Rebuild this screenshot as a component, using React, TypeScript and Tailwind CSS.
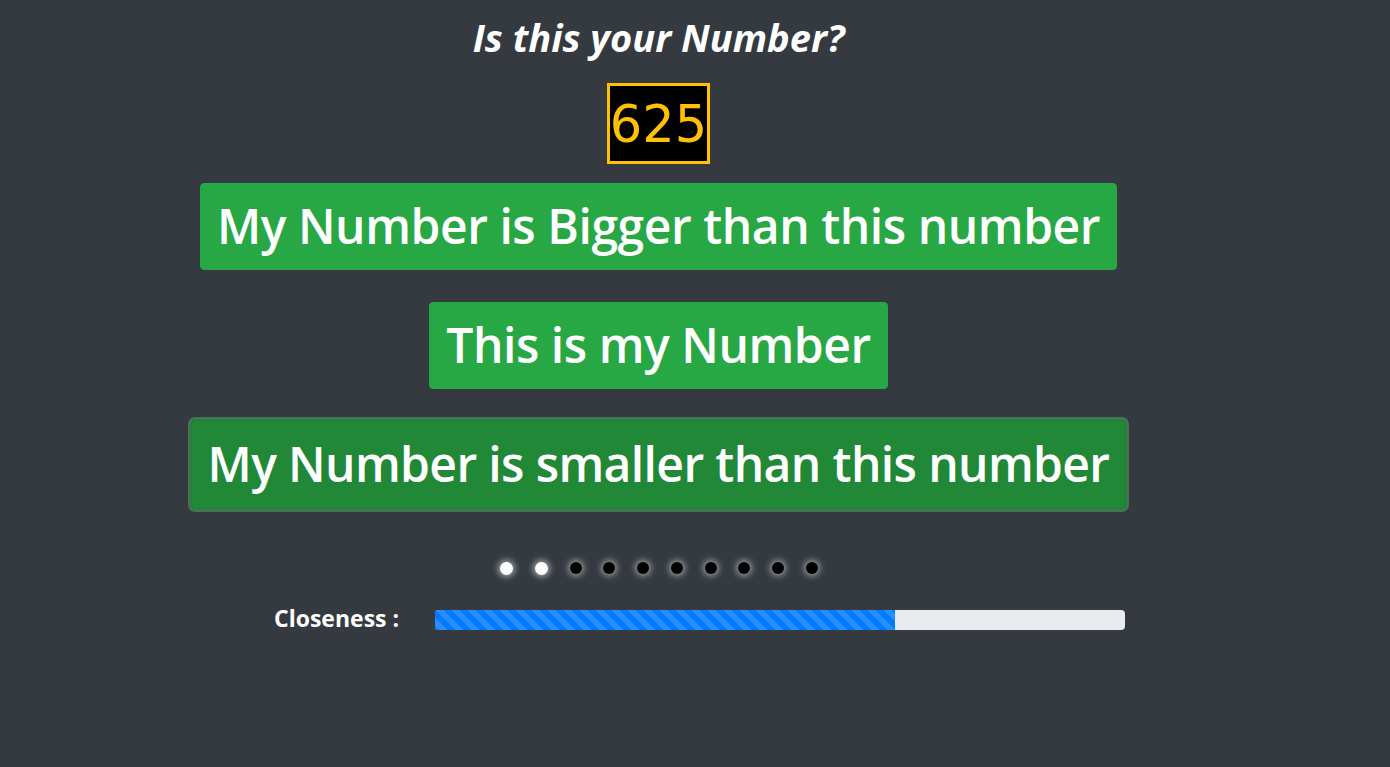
import React from "react";

export default function App() {
  const dots = [true, true, false, false, false, false, false, false, false, false];
  return (
    <div
      className="min-h-[767px] w-full bg-[#343a40] text-white"
      style={{ fontFamily: '"Open Sans", "Noto Sans", sans-serif' }}
    >
      <div className="flex w-[1317px] flex-col items-center pt-[15px]">
        <h1 className="text-[38px] font-bold italic leading-[1.2]">Is this your Number?</h1>
        <div
          className="mt-[22px] flex h-[81px] w-[103px] items-center justify-center border-[3px] border-[#ffc107] bg-black pt-[4px] text-[51px] text-[#ffc107]"
          style={{ fontFamily: '"DejaVu Sans", sans-serif' }}
        >
          625
        </div>
        <button className="mt-[19px] flex h-[87px] items-center rounded-[4px] border border-[#28a745] bg-[#28a745] px-[16px] text-[48px] font-semibold tracking-[-0.45px] text-white">
          My Number is Bigger than this number
        </button>
        <button className="mt-[32px] flex h-[87px] items-center rounded-[4px] border border-[#28a745] bg-[#28a745] px-[16px] text-[48px] font-semibold tracking-[-0.45px] text-white">
          This is my Number
        </button>
        <button className="mt-[31px] flex h-[89px] items-center rounded-[4px] border border-[#1e7e34] bg-[#218838] px-[16px] text-[48px] font-semibold tracking-[-0.62px] text-white shadow-[0_0_0_3px_rgba(72,180,97,0.5)]">
          My Number is smaller than this number
        </button>
        <div className="mt-[53px] flex items-center gap-[21.7px] pl-[1px]">
          {dots.map((on, i) => (
            <span
              key={i}
              className={
                on
                  ? "block h-[13px] w-[13px] rounded-full bg-white shadow-[0_0_6px_2px_rgba(255,255,255,0.55)]"
                  : "block h-[12px] w-[12px] rounded-full bg-black shadow-[0_0_6px_2px_rgba(255,255,255,0.5)]"
              }
            />
          ))}
        </div>
        <div className="mt-[32px] flex w-full items-center">
          <div className="ml-[274px] w-[161px] pb-[3px] text-[23px] font-bold leading-none">Closeness :</div>
          <div className="flex h-[20px] w-[690px] overflow-hidden rounded-[4px] bg-[#e9ecef]">
            <div
              className="h-full bg-[#007bff]"
              style={{
                width: "66.7%",
                backgroundImage:
                  "linear-gradient(45deg, rgba(255,255,255,.15) 25%, transparent 25%, transparent 50%, rgba(255,255,255,.15) 50%, rgba(255,255,255,.15) 75%, transparent 75%, transparent)",
                backgroundSize: "16px 16px",
              }}
            />
          </div>
        </div>
      </div>
    </div>
  );
}
